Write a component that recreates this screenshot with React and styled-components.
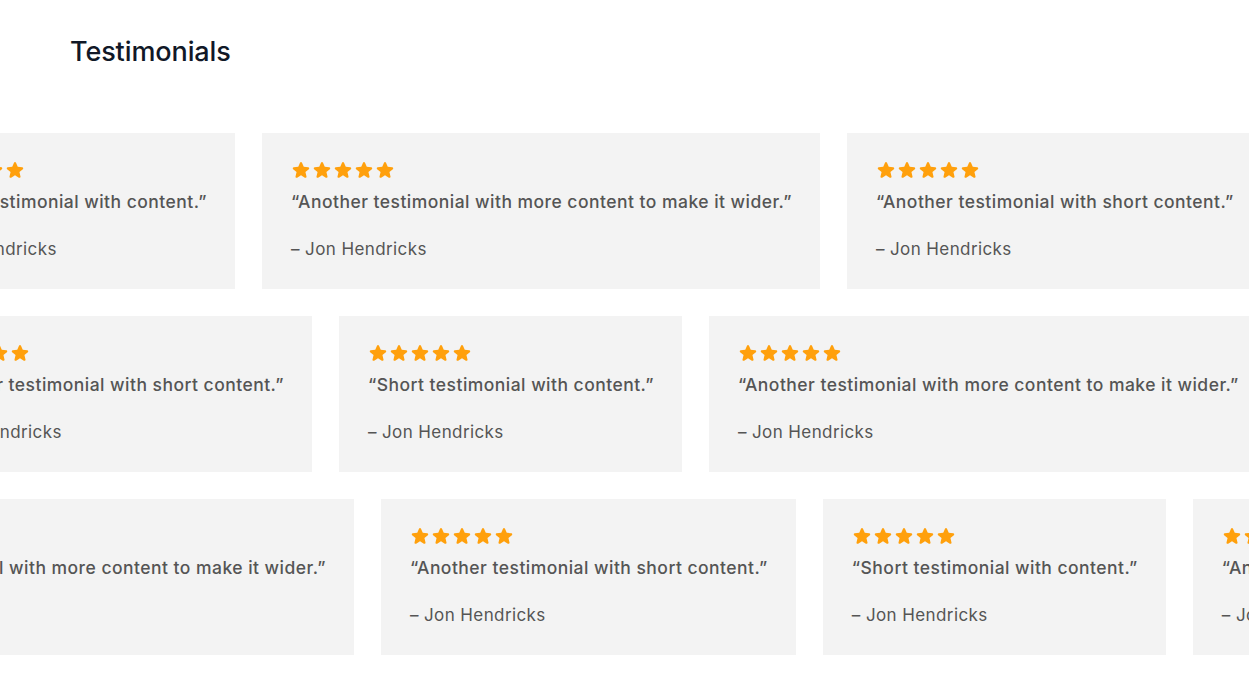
import styled, { createGlobalStyle } from 'styled-components';

const GlobalStyle = createGlobalStyle`
  body {
    margin: 0;
    background: #ffffff;
    font-family: 'Inter', 'Noto Sans', sans-serif;
    overflow: hidden;
  }
`;

const quotes = {
  short: 'Short testimonial with content.',
  more: 'Another testimonial with more content to make it wider.',
  another: 'Another testimonial with short content.',
};

const rows = [
  { offset: -108, items: ['short', 'more', 'another', 'short'] },
  { offset: -103, items: ['another', 'short', 'more', 'another'] },
  { offset: -204, items: ['more', 'another', 'short', 'more', 'another'] },
];

const Star = () => (
  <svg width="20" height="20" viewBox="0 0 24 24" fill="#ffa00c">
    <path d="M10.788 3.21c.448-1.077 1.976-1.077 2.424 0l2.082 5.006 5.404.434c1.164.093 1.636 1.545.749 2.305l-4.117 3.527 1.257 5.273c.271 1.136-.964 2.033-1.96 1.425L12 18.354 7.373 21.18c-.996.608-2.231-.29-1.96-1.425l1.257-5.273-4.117-3.527c-.887-.76-.415-2.212.749-2.305l5.404-.434 2.082-5.005Z" />
  </svg>
);

export default function App() {
  return (
    <Page>
      <GlobalStyle />
      <Title>Testimonials</Title>
      <Rows>
        {rows.map((row, i) => (
          <Row key={i} $offset={row.offset}>
            {row.items.map((k, j) => (
              <Card key={j}>
                <Stars>
                  {[0, 1, 2, 3, 4].map((s) => (
                    <Star key={s} />
                  ))}
                </Stars>
                <Quote>“{quotes[k]}”</Quote>
                <Author>– Jon Hendricks</Author>
              </Card>
            ))}
          </Row>
        ))}
      </Rows>
    </Page>
  );
}

const Page = styled.div`
  width: 1249px;
  height: 686px;
  overflow: hidden;
`;

const Title = styled.h2`
  margin: 0;
  padding: 36px 0 0 70px;
  font-size: 27px;
  line-height: 32px;
  font-weight: 500;
  color: #111827;
  letter-spacing: -0.1px;
`;

const Rows = styled.div`
  display: flex;
  flex-direction: column;
  gap: 27px;
  margin-top: 65px;
`;

const Row = styled.div`
  display: flex;
  gap: 27px;
  margin-left: ${(p) => p.$offset}px;
`;

const Card = styled.div`
  flex: none;
  background: #f3f3f3;
  padding: 27px 28px 28px 29px;
  white-space: nowrap;
`;

const Stars = styled.div`
  display: flex;
  gap: 1px;
  height: 20px;
`;

const Quote = styled.p`
  margin: 10px 0 0;
  font-size: 17.5px;
  line-height: 24px;
  font-weight: 500;
  letter-spacing: 0.47px;
  color: #555555;
`;

const Author = styled.p`
  margin: 23px 0 0;
  font-size: 17px;
  line-height: 24px;
  font-weight: 400;
  letter-spacing: 0.4px;
  color: #555555;
`;
